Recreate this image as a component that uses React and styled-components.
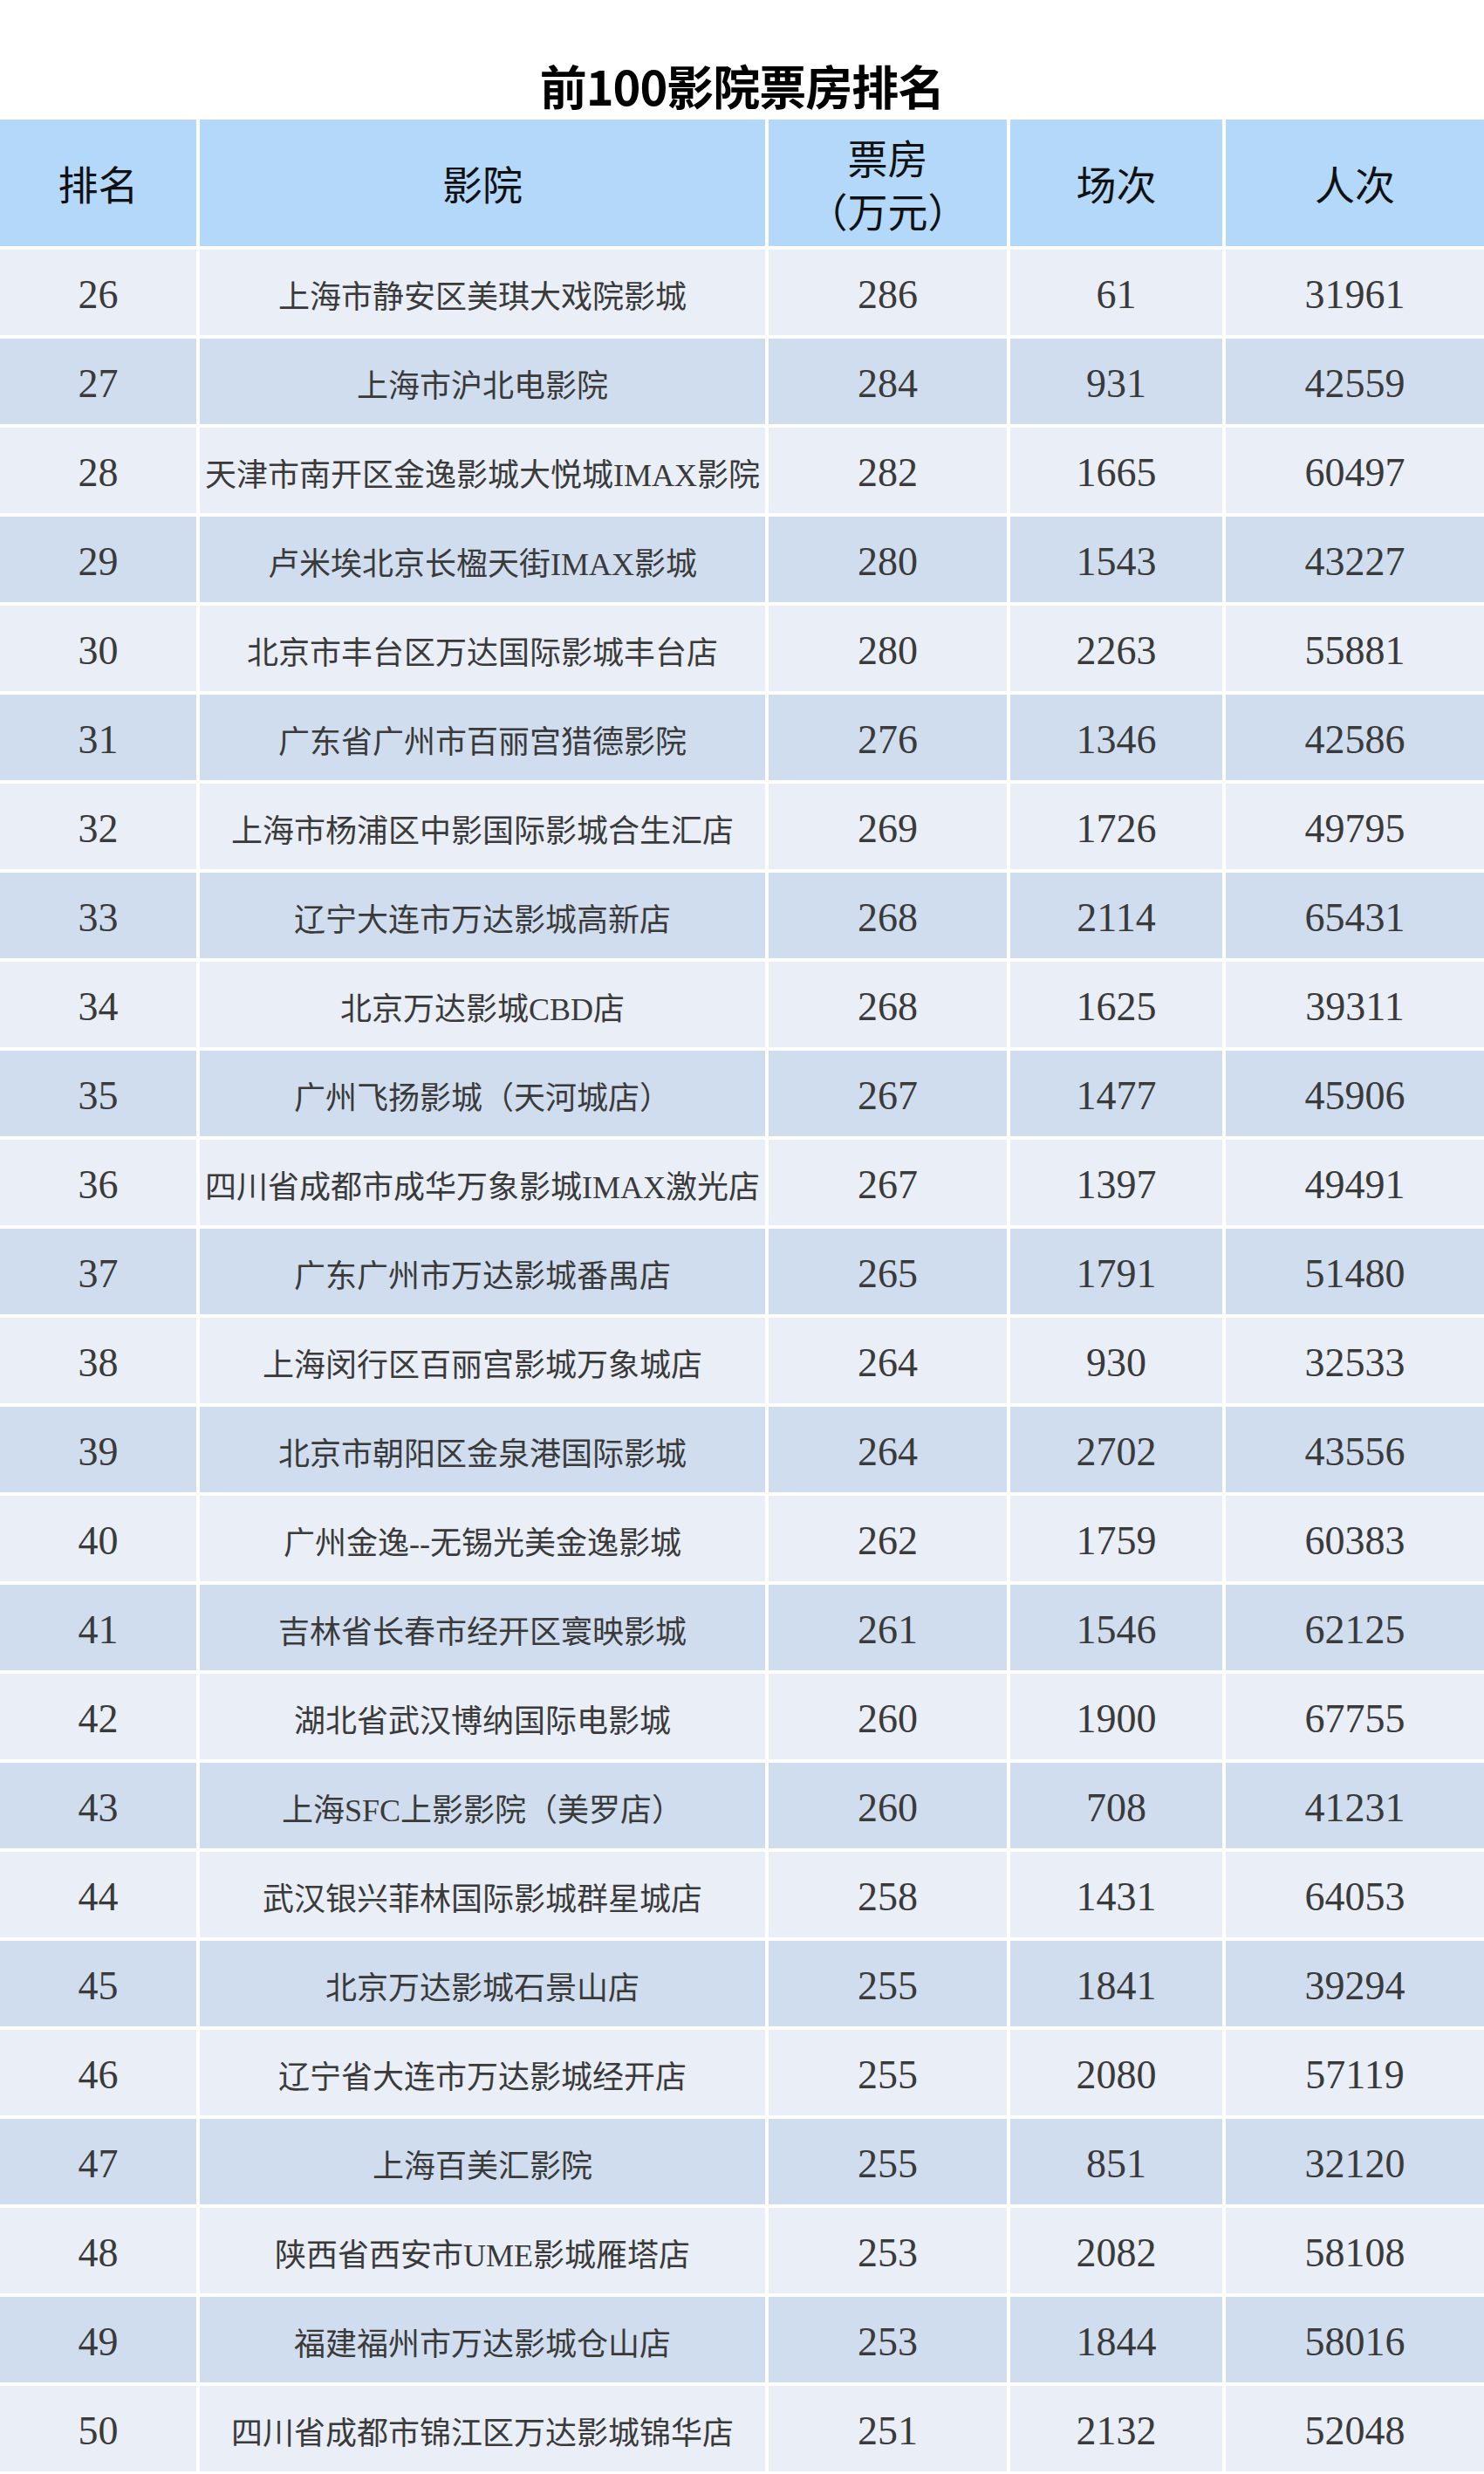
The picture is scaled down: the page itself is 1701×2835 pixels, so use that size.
import React from 'react'
import styled, { createGlobalStyle } from 'styled-components'

const GlobalStyle = createGlobalStyle`
	html, body {
		margin: 0;
		padding: 0;
		background: #fff;
	}
	body {
		font-family: 'Liberation Serif', 'Noto Sans CJK SC', serif;
	}
`

const Page = styled.div`
	width: 1701px;
	background: #fff;
`

const Title = styled.h1`
	margin: 0;
	height: 137px;
	box-sizing: border-box;
	padding-top: 71px;
	text-align: center;
	font-family: 'Noto Sans CJK SC', sans-serif;
	font-weight: 700;
	font-size: 54px;
	line-height: 54px;
	color: #000;
	letter-spacing: -1px;
`

const Table = styled.div`
	display: flex;
	flex-direction: column;
	gap: 4px;
`

const Row = styled.div`
	display: grid;
	grid-template-columns: 225px 648px 273px 243px 1fr;
	column-gap: 4px;
	height: ${({ head }) => (head ? '145px' : '98px')};
`

const HeadCell = styled.div`
	background: #b3d8f9;
	display: flex;
	flex-direction: column;
	align-items: center;
	justify-content: center;
	font-family: 'Noto Sans CJK SC', serif;
	font-size: 46px;
	line-height: 61px;
	color: #111;
`

const Cell = styled.div`
	background: ${({ alt }) => (alt ? '#d0ddee' : '#e9eef7')};
	display: flex;
	align-items: center;
	justify-content: center;
	white-space: nowrap;
	color: #3a3a3a;
	font-family: 'Liberation Serif', 'Noto Sans CJK SC', serif;
	font-size: ${({ name }) => (name ? '36px' : '46px')};
	padding-top: 4px;
	box-sizing: border-box;
`

const rows = [
	[26, '上海市静安区美琪大戏院影城', 286, 61, 31961],
	[27, '上海市沪北电影院', 284, 931, 42559],
	[28, '天津市南开区金逸影城大悦城IMAX影院', 282, 1665, 60497],
	[29, '卢米埃北京长楹天街IMAX影城', 280, 1543, 43227],
	[30, '北京市丰台区万达国际影城丰台店', 280, 2263, 55881],
	[31, '广东省广州市百丽宫猎德影院', 276, 1346, 42586],
	[32, '上海市杨浦区中影国际影城合生汇店', 269, 1726, 49795],
	[33, '辽宁大连市万达影城高新店', 268, 2114, 65431],
	[34, '北京万达影城CBD店', 268, 1625, 39311],
	[35, '广州飞扬影城（天河城店）', 267, 1477, 45906],
	[36, '四川省成都市成华万象影城IMAX激光店', 267, 1397, 49491],
	[37, '广东广州市万达影城番禺店', 265, 1791, 51480],
	[38, '上海闵行区百丽宫影城万象城店', 264, 930, 32533],
	[39, '北京市朝阳区金泉港国际影城', 264, 2702, 43556],
	[40, '广州金逸--无锡光美金逸影城', 262, 1759, 60383],
	[41, '吉林省长春市经开区寰映影城', 261, 1546, 62125],
	[42, '湖北省武汉博纳国际电影城', 260, 1900, 67755],
	[43, '上海SFC上影影院（美罗店）', 260, 708, 41231],
	[44, '武汉银兴菲林国际影城群星城店', 258, 1431, 64053],
	[45, '北京万达影城石景山店', 255, 1841, 39294],
	[46, '辽宁省大连市万达影城经开店', 255, 2080, 57119],
	[47, '上海百美汇影院', 255, 851, 32120],
	[48, '陕西省西安市UME影城雁塔店', 253, 2082, 58108],
	[49, '福建福州市万达影城仓山店', 253, 1844, 58016],
	[50, '四川省成都市锦江区万达影城锦华店', 251, 2132, 52048],
]

const App = () => {
	return (
		<>
			<GlobalStyle />
			<Page>
				<Title>前100影院票房排名</Title>
				<Table>
					<Row head>
						<HeadCell>排名</HeadCell>
						<HeadCell>影院</HeadCell>
						<HeadCell>
							<span>票房</span>
							<span>（万元）</span>
						</HeadCell>
						<HeadCell>场次</HeadCell>
						<HeadCell>人次</HeadCell>
					</Row>
					{rows.map(([rank, name, box, shows, people], i) => (
						<Row key={rank}>
							<Cell alt={i % 2 === 1}>{rank}</Cell>
							<Cell alt={i % 2 === 1} name>
								{name}
							</Cell>
							<Cell alt={i % 2 === 1}>{box}</Cell>
							<Cell alt={i % 2 === 1}>{shows}</Cell>
							<Cell alt={i % 2 === 1}>{people}</Cell>
						</Row>
					))}
				</Table>
			</Page>
		</>
	)
}

export default App
